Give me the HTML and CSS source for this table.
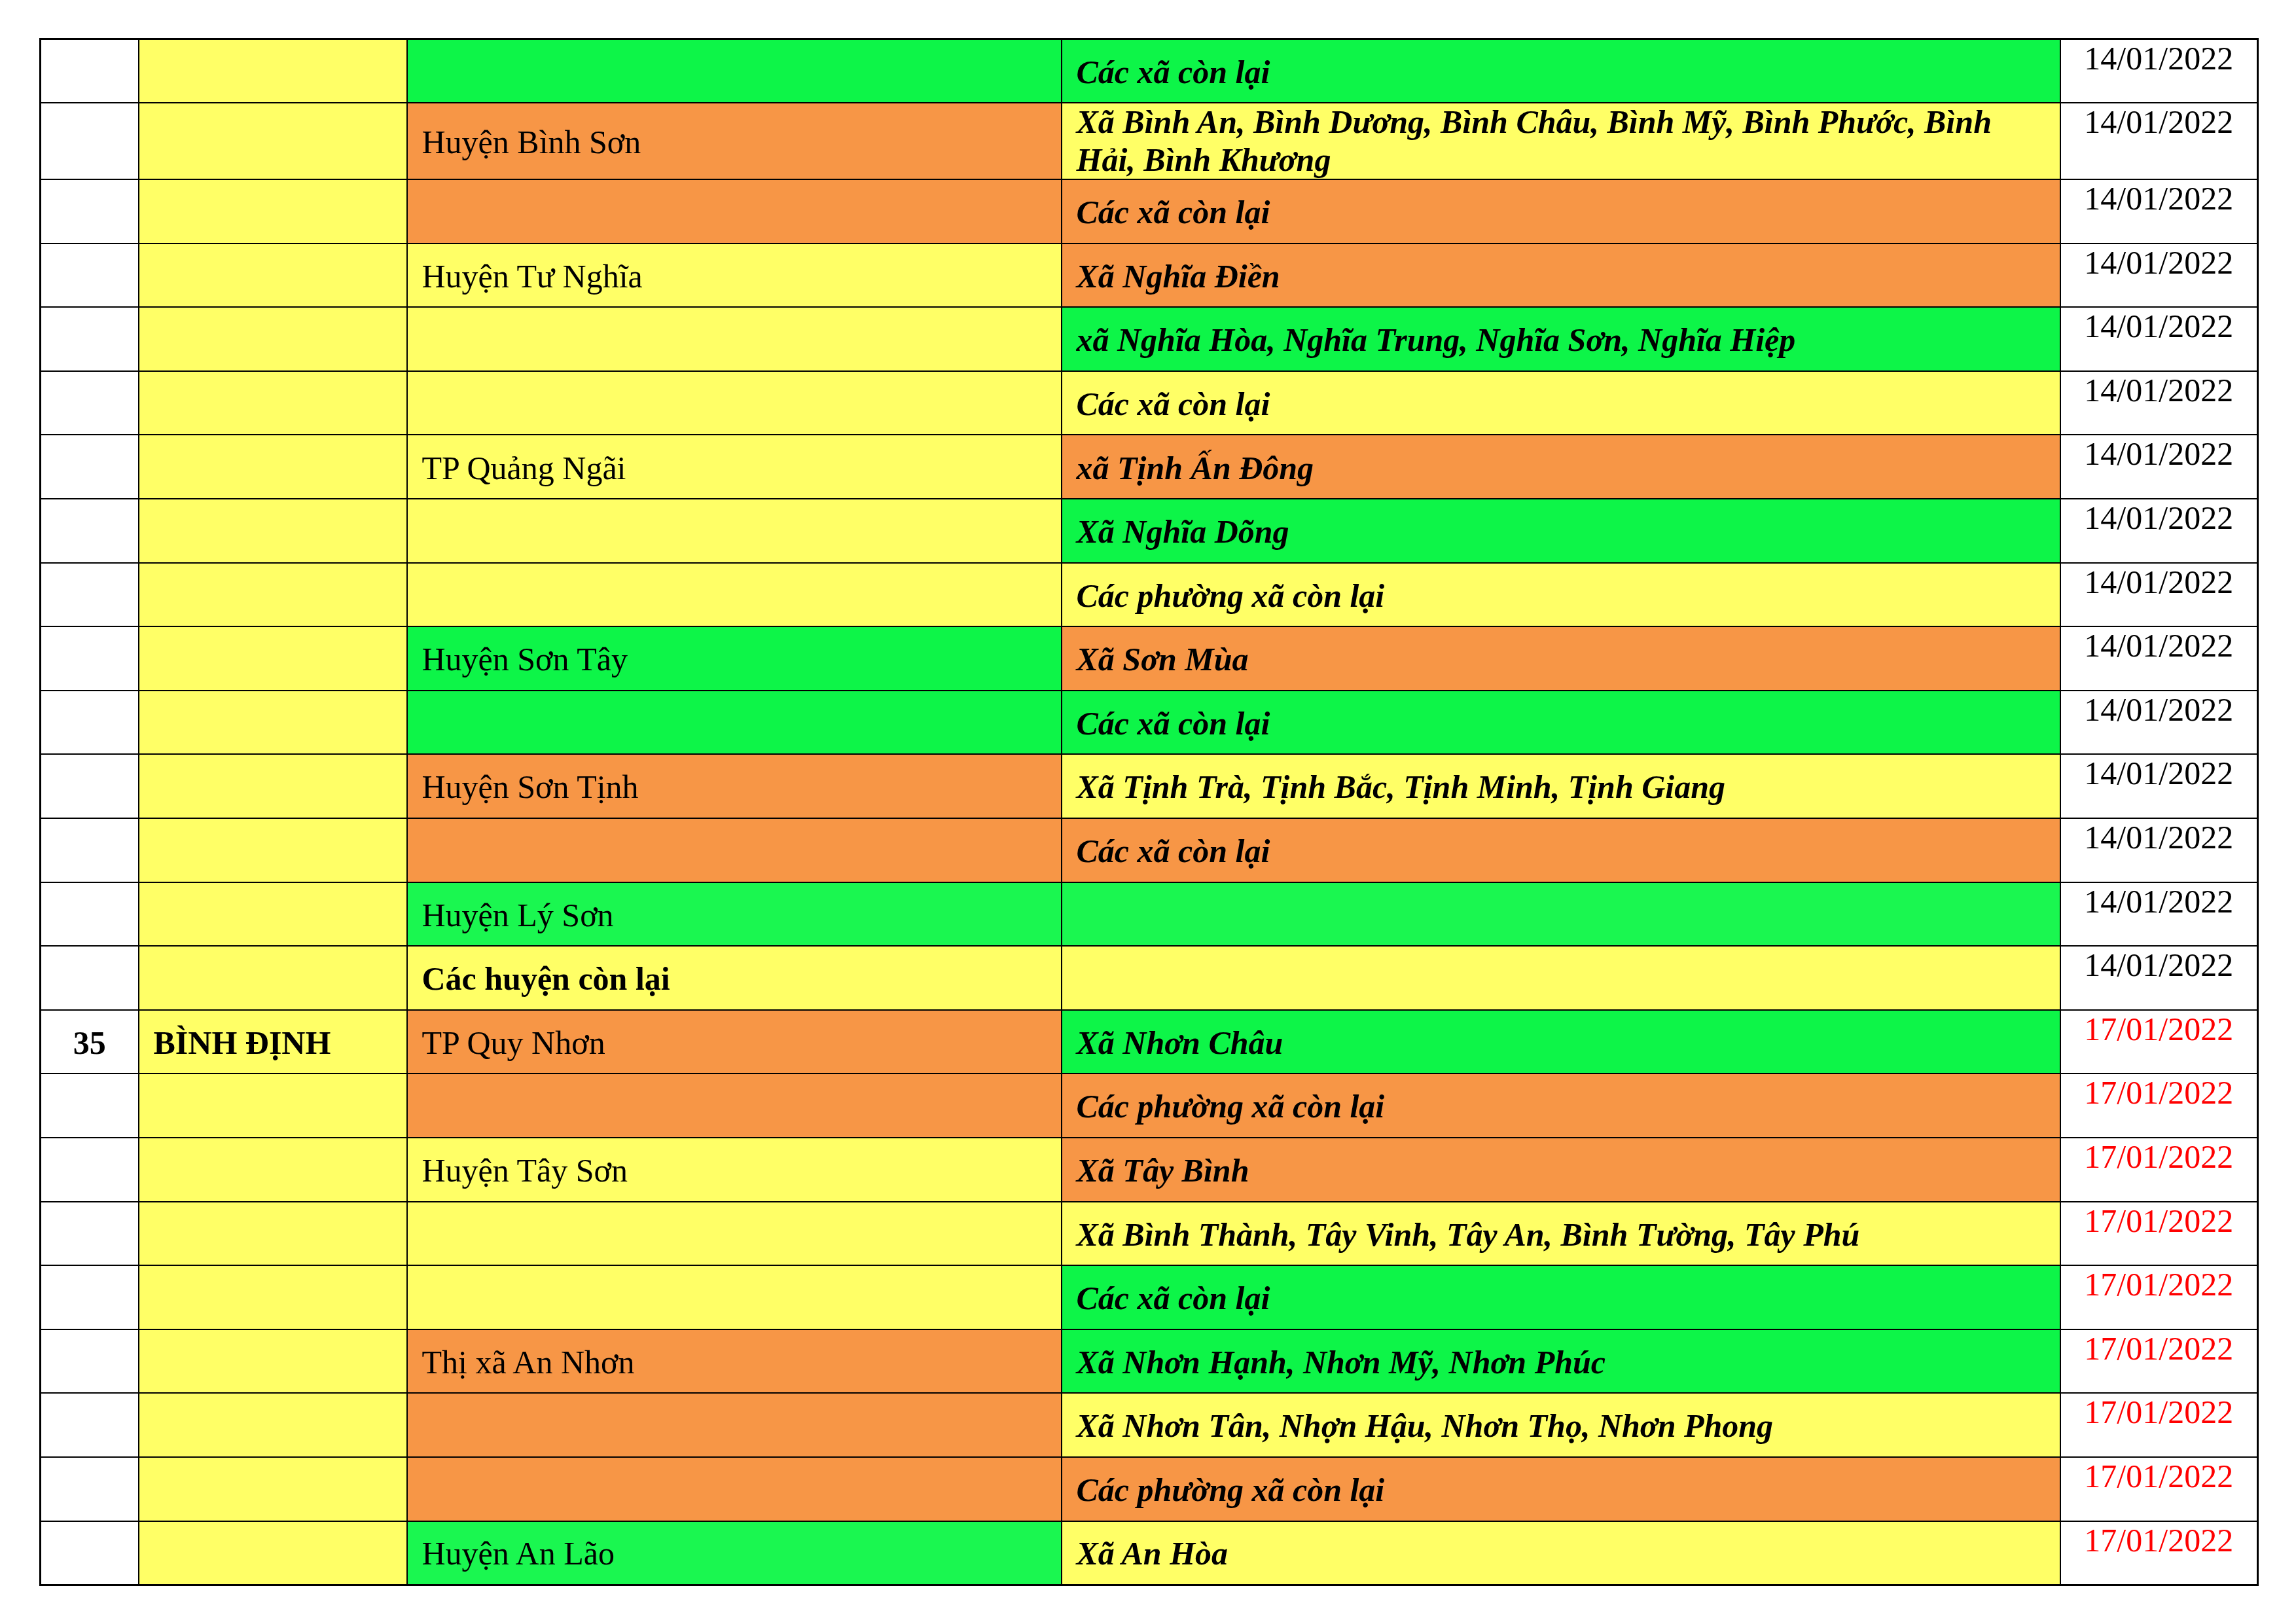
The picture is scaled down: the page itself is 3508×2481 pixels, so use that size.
FILE: index.html
```html
<!DOCTYPE html>
<html lang="vi">
<head>
<meta charset="utf-8">
<title>Danh sách cấp độ dịch</title>
<link rel="stylesheet" href="styles.css">
</head>
<body>
<div class="page">
<table class="grid">
<colgroup>
<col class="c-no"><col class="c-prov"><col class="c-dist"><col class="c-ward"><col class="c-date">
</colgroup>
<tbody>
<tr><td class="no"></td><td class="y prov"></td><td class="g"></td><td class="g ward">Các xã còn lại</td><td class="date">14/01/2022</td></tr>
<tr><td class="no"></td><td class="y prov"></td><td class="o">Huyện Bình Sơn</td><td class="y ward tight">Xã Bình An, Bình Dương, Bình Châu, Bình Mỹ, Bình Phước, Bình Hải, Bình Khương</td><td class="date">14/01/2022</td></tr>
<tr><td class="no"></td><td class="y prov"></td><td class="o"></td><td class="o ward">Các xã còn lại</td><td class="date">14/01/2022</td></tr>
<tr><td class="no"></td><td class="y prov"></td><td class="y">Huyện Tư Nghĩa</td><td class="o ward">Xã Nghĩa Điền</td><td class="date">14/01/2022</td></tr>
<tr><td class="no"></td><td class="y prov"></td><td class="y"></td><td class="g ward">xã Nghĩa Hòa, Nghĩa Trung, Nghĩa Sơn, Nghĩa Hiệp</td><td class="date">14/01/2022</td></tr>
<tr><td class="no"></td><td class="y prov"></td><td class="y"></td><td class="y ward">Các xã còn lại</td><td class="date">14/01/2022</td></tr>
<tr><td class="no"></td><td class="y prov"></td><td class="y">TP Quảng Ngãi</td><td class="o ward">xã Tịnh Ấn Đông</td><td class="date">14/01/2022</td></tr>
<tr><td class="no"></td><td class="y prov"></td><td class="y"></td><td class="g ward">Xã Nghĩa Dõng</td><td class="date">14/01/2022</td></tr>
<tr><td class="no"></td><td class="y prov"></td><td class="y"></td><td class="y ward">Các phường xã còn lại</td><td class="date">14/01/2022</td></tr>
<tr><td class="no"></td><td class="y prov"></td><td class="g">Huyện Sơn Tây</td><td class="o ward">Xã Sơn Mùa</td><td class="date">14/01/2022</td></tr>
<tr><td class="no"></td><td class="y prov"></td><td class="g"></td><td class="g ward">Các xã còn lại</td><td class="date">14/01/2022</td></tr>
<tr><td class="no"></td><td class="y prov"></td><td class="o">Huyện Sơn Tịnh</td><td class="y ward">Xã Tịnh Trà, Tịnh Bắc, Tịnh Minh, Tịnh Giang</td><td class="date">14/01/2022</td></tr>
<tr><td class="no"></td><td class="y prov"></td><td class="o"></td><td class="o ward">Các xã còn lại</td><td class="date">14/01/2022</td></tr>
<tr><td class="no"></td><td class="y prov"></td><td class="lg">Huyện Lý Sơn</td><td class="lg ward"></td><td class="date">14/01/2022</td></tr>
<tr><td class="no"></td><td class="y prov"></td><td class="y strong">Các huyện còn lại</td><td class="y ward"></td><td class="date">14/01/2022</td></tr>
<tr><td class="no">35</td><td class="y prov">BÌNH ĐỊNH</td><td class="o">TP Quy Nhơn</td><td class="g ward">Xã Nhơn Châu</td><td class="date red">17/01/2022</td></tr>
<tr><td class="no"></td><td class="y prov"></td><td class="o"></td><td class="o ward">Các phường xã còn lại</td><td class="date red">17/01/2022</td></tr>
<tr><td class="no"></td><td class="y prov"></td><td class="y">Huyện Tây Sơn</td><td class="o ward">Xã Tây Bình</td><td class="date red">17/01/2022</td></tr>
<tr><td class="no"></td><td class="y prov"></td><td class="y"></td><td class="y ward">Xã Bình Thành, Tây Vinh, Tây An, Bình Tường, Tây Phú</td><td class="date red">17/01/2022</td></tr>
<tr><td class="no"></td><td class="y prov"></td><td class="y"></td><td class="g ward">Các xã còn lại</td><td class="date red">17/01/2022</td></tr>
<tr><td class="no"></td><td class="y prov"></td><td class="o">Thị xã An Nhơn</td><td class="g ward">Xã Nhơn Hạnh, Nhơn Mỹ, Nhơn Phúc</td><td class="date red">17/01/2022</td></tr>
<tr><td class="no"></td><td class="y prov"></td><td class="o"></td><td class="y ward">Xã Nhơn Tân, Nhợn Hậu, Nhơn Thọ, Nhơn Phong</td><td class="date red">17/01/2022</td></tr>
<tr><td class="no"></td><td class="y prov"></td><td class="o"></td><td class="o ward">Các phường xã còn lại</td><td class="date red">17/01/2022</td></tr>
<tr><td class="no"></td><td class="y prov"></td><td class="lg">Huyện An Lão</td><td class="y ward">Xã An Hòa</td><td class="date red">17/01/2022</td></tr>
</tbody>
</table>
</div>
</body>
</html>
```

FILE: styles.css
```css
html, body {
  margin: 0;
  padding: 0;
  background: #ffffff;
}

.page {
  padding: 58px 0 0 60px;
}

.grid {
  border-collapse: collapse;
  table-layout: fixed;
  width: 3388px;
  font-family: "Liberation Serif", "Times New Roman", serif;
  font-size: 50px;
  line-height: 1.15;
  color: #000000;
  border: 3px solid #000000;
}

.c-no { width: 150px; }
.c-prov { width: 410px; }
.c-dist { width: 1000px; }
.c-ward { width: 1526px; }
.c-date { width: 302px; }

.grid tr {
  height: 97.6px;
}

.grid td {
  border: 2px solid #000000;
  padding: 4px 22px 0;
  vertical-align: middle;
  background: #ffffff;
}

.grid td.tight {
  padding-top: 0;
}

.grid td.no {
  text-align: center;
  font-weight: bold;
  padding-left: 0;
  padding-right: 0;
}

.grid td.prov {
  font-weight: bold;
}

.grid td.ward {
  font-weight: bold;
  font-style: italic;
}

.grid td.strong {
  font-weight: bold;
}

.grid td.date {
  text-align: center;
  vertical-align: top;
  padding: 0;
}

.grid td.red {
  color: #ff0000;
}

.grid td.y { background: #ffff66; }
.grid td.o { background: #f79646; }
.grid td.g { background: #0df548; }
.grid td.lg { background: #1af750; }
```
